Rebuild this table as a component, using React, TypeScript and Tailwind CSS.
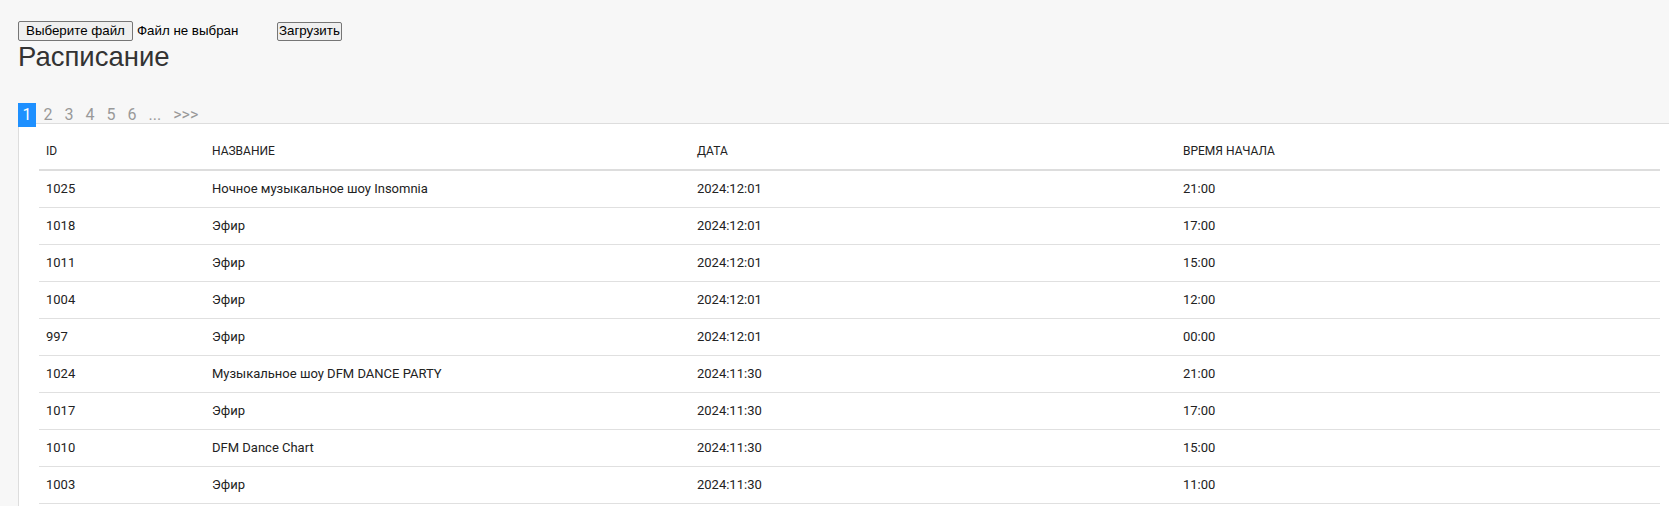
import React from "react";

type Row = { id: number; name: string; date: string; time: string };

const rows: Row[] = [
  { id: 1025, name: "Ночное музыкальное шоу Insomnia", date: "2024:12:01", time: "21:00" },
  { id: 1018, name: "Эфир", date: "2024:12:01", time: "17:00" },
  { id: 1011, name: "Эфир", date: "2024:12:01", time: "15:00" },
  { id: 1004, name: "Эфир", date: "2024:12:01", time: "12:00" },
  { id: 997, name: "Эфир", date: "2024:12:01", time: "00:00" },
  { id: 1024, name: "Музыкальное шоу DFM DANCE PARTY", date: "2024:11:30", time: "21:00" },
  { id: 1017, name: "Эфир", date: "2024:11:30", time: "17:00" },
  { id: 1010, name: "DFM Dance Chart", date: "2024:11:30", time: "15:00" },
  { id: 1003, name: "Эфир", date: "2024:11:30", time: "11:00" },
];

const pages = ["2", "3", "4", "5", "6", "...", ">>>"];

export default function App() {
  return (
    <div className="h-[506px] overflow-hidden bg-[#f7f7f7] font-['Liberation_Sans',Arial,sans-serif]">
      {/* upload form */}
      <div className="flex items-center pl-[18px] pt-[21px] text-[13.33px] text-black">
        <div className="flex w-[255px] items-center">
          <button className="h-[20px] rounded-[2px] border border-[#767676] bg-[#efefef] px-[7px] leading-none">
            Выберите файл
          </button>
          <span className="ml-[4px]">Файл не выбран</span>
        </div>
        <button className="ml-[4px] h-[19px] rounded-[2px] border border-[#767676] bg-[#efefef] px-[1px] leading-none">
          Загрузить
        </button>
      </div>

      <h1 className="ml-[18px] text-[27.5px] leading-[32px] text-[#333]">Расписание</h1>

      {/* pagination */}
      <div className="relative z-10 ml-[18px] mt-[30px] flex h-[24px] items-center gap-[3px] font-['Roboto',sans-serif] text-[16px] text-[#999]">
        <span className="h-[24px] w-[18px] bg-[#1e90ff] text-center leading-[24px] text-white">1</span>
        {pages.map((p) => (
          <span key={p} className="px-[4.5px] leading-[24px]">
            {p}
          </span>
        ))}
      </div>

      {/* schedule table */}
      <div className="-mt-[4px] ml-[18px] border-l border-t border-[#ddd] bg-white pb-4 pl-[20px] pr-[9px] pt-[8px]">
        <table className="w-full border-collapse font-['Roboto',sans-serif] text-[13px] text-[#222]">
          <colgroup>
            <col className="w-[166px]" />
            <col className="w-[485px]" />
            <col className="w-[486px]" />
            <col />
          </colgroup>
          <thead>
            <tr className="border-b-2 border-[#ddd] text-[12px]">
              <th className="h-[38px] pl-[7px] text-left font-normal uppercase">ID</th>
              <th className="h-[38px] pl-[7px] text-left font-normal uppercase">Название</th>
              <th className="h-[38px] pl-[7px] text-left font-normal uppercase">Дата</th>
              <th className="h-[38px] pl-[7px] text-left font-normal uppercase">Время начала</th>
            </tr>
          </thead>
          <tbody>
            {rows.map((r) => (
              <tr key={r.id} className="border-b border-[#e0e0e0]">
                <td className="h-[37px] pl-[7px]">{r.id}</td>
                <td className="h-[37px] pl-[7px]">{r.name}</td>
                <td className="h-[37px] pl-[7px]">{r.date}</td>
                <td className="h-[37px] pl-[7px]">{r.time}</td>
              </tr>
            ))}
          </tbody>
        </table>
      </div>
    </div>
  );
}
